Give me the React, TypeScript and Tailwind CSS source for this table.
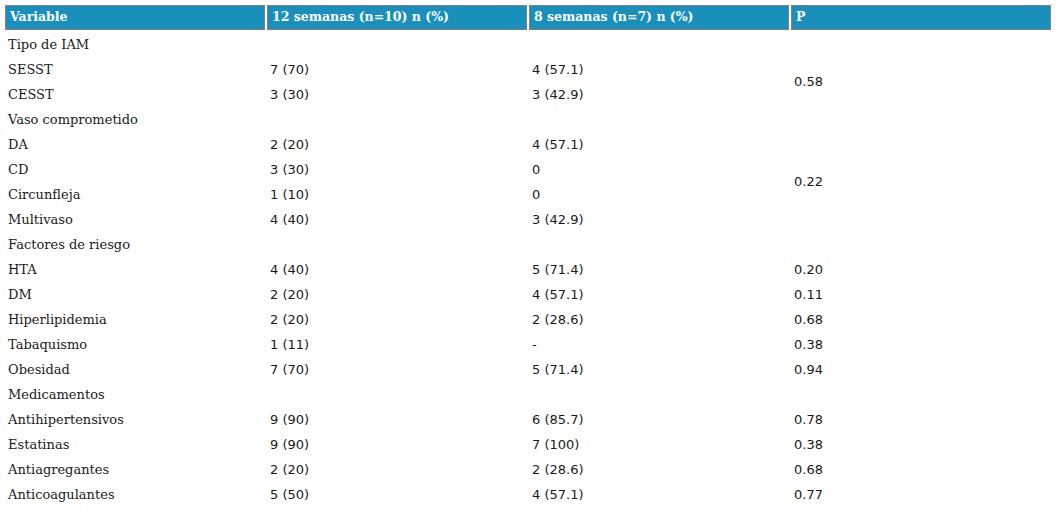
type Row = {
  label: string;
  a?: string;
  b?: string;
  p?: string;
  span?: number;
  skipP?: boolean;
};

const rows: Row[] = [
  { label: "Tipo de IAM", p: "" },
  { label: "SESST", a: "7 (70)", b: "4 (57.1)", p: "0.58", span: 2 },
  { label: "CESST", a: "3 (30)", b: "3 (42.9)", skipP: true },
  { label: "Vaso comprometido", p: "" },
  { label: "DA", a: "2 (20)", b: "4 (57.1)", p: "0.22", span: 4 },
  { label: "CD", a: "3 (30)", b: "0", skipP: true },
  { label: "Circunfleja", a: "1 (10)", b: "0", skipP: true },
  { label: "Multivaso", a: "4 (40)", b: "3 (42.9)", skipP: true },
  { label: "Factores de riesgo", p: "" },
  { label: "HTA", a: "4 (40)", b: "5 (71.4)", p: "0.20" },
  { label: "DM", a: "2 (20)", b: "4 (57.1)", p: "0.11" },
  { label: "Hiperlipidemia", a: "2 (20)", b: "2 (28.6)", p: "0.68" },
  { label: "Tabaquismo", a: "1 (11)", b: "-", p: "0.38" },
  { label: "Obesidad", a: "7 (70)", b: "5 (71.4)", p: "0.94" },
  { label: "Medicamentos", p: "" },
  { label: "Antihipertensivos", a: "9 (90)", b: "6 (85.7)", p: "0.78" },
  { label: "Estatinas", a: "9 (90)", b: "7 (100)", p: "0.38" },
  { label: "Antiagregantes", a: "2 (20)", b: "2 (28.6)", p: "0.68" },
  { label: "Anticoagulantes", a: "5 (50)", b: "4 (57.1)", p: "0.77" },
];

const headers = ["Variable", "12 semanas (n=10) n (%)", "8 semanas (n=7) n (%)", "P"];

const num = "px-[3px] pt-[2px] align-middle text-[13px] font-['DejaVu_Sans',sans-serif] text-[#1a1a1a]";

export default function App() {
  return (
    <div className="bg-white w-[1056px] h-[510px] overflow-hidden px-[3px] pt-[3px]">
      <table className="w-full table-fixed border-separate border-spacing-[2px]">
        <thead>
          <tr className="h-[25px]">
            {headers.map((h) => (
              <th
                key={h}
                className="border border-[#808080] bg-[#1990bc] px-[4px] text-left align-middle text-[12.5px] font-bold text-white font-['DejaVu_Serif',serif]"
              >
                {h}
              </th>
            ))}
          </tr>
        </thead>
        <tbody>
          {rows.map((r) => (
            <tr key={r.label} className="h-[23px]">
              <td className="px-[3px] pt-[2px] align-middle text-[13px] text-[#1a1a1a] font-['DejaVu_Serif',serif] whitespace-nowrap">
                {r.label}
              </td>
              <td className={num}>{r.a ?? ""}</td>
              <td className={num}>{r.b ?? ""}</td>
              {!r.skipP && (
                <td rowSpan={r.span ?? 1} className={num}>
                  {r.p}
                </td>
              )}
            </tr>
          ))}
        </tbody>
      </table>
    </div>
  );
}
